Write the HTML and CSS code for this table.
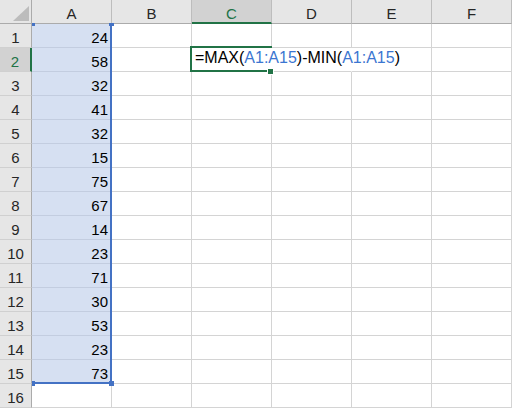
FILE: index.html
```html
<!DOCTYPE html>
<html>
<head>
<meta charset="utf-8">
<link rel="stylesheet" href="styles.css">
</head>
<body>
<div class="sheet">
  <div class="c corner"><svg width="31" height="23" viewBox="0 0 31 23"><polygon points="13,21 29,21 29,6" fill="#bcbcbc"/></svg></div>
  <div class="c h">A</div><div class="c h">B</div><div class="c h hsel">C</div><div class="c h">D</div><div class="c h">E</div><div class="c h">F</div>

  <div class="c rh">1</div><div class="c a">24</div><div class="c"></div><div class="c"></div><div class="c"></div><div class="c"></div><div class="c"></div>
  <div class="c rh rsel">2</div><div class="c a">58</div><div class="c"></div><div class="c f nr">=MAX(<span class="ref">A1:A15</span>)-MIN(<span class="ref">A1:A15</span>)</div><div class="c nr"></div><div class="c"></div><div class="c"></div>
  <div class="c rh">3</div><div class="c a">32</div><div class="c"></div><div class="c"></div><div class="c"></div><div class="c"></div><div class="c"></div>
  <div class="c rh">4</div><div class="c a">41</div><div class="c"></div><div class="c"></div><div class="c"></div><div class="c"></div><div class="c"></div>
  <div class="c rh">5</div><div class="c a">32</div><div class="c"></div><div class="c"></div><div class="c"></div><div class="c"></div><div class="c"></div>
  <div class="c rh">6</div><div class="c a">15</div><div class="c"></div><div class="c"></div><div class="c"></div><div class="c"></div><div class="c"></div>
  <div class="c rh">7</div><div class="c a">75</div><div class="c"></div><div class="c"></div><div class="c"></div><div class="c"></div><div class="c"></div>
  <div class="c rh">8</div><div class="c a">67</div><div class="c"></div><div class="c"></div><div class="c"></div><div class="c"></div><div class="c"></div>
  <div class="c rh">9</div><div class="c a">14</div><div class="c"></div><div class="c"></div><div class="c"></div><div class="c"></div><div class="c"></div>
  <div class="c rh">10</div><div class="c a">23</div><div class="c"></div><div class="c"></div><div class="c"></div><div class="c"></div><div class="c"></div>
  <div class="c rh">11</div><div class="c a">71</div><div class="c"></div><div class="c"></div><div class="c"></div><div class="c"></div><div class="c"></div>
  <div class="c rh">12</div><div class="c a">30</div><div class="c"></div><div class="c"></div><div class="c"></div><div class="c"></div><div class="c"></div>
  <div class="c rh">13</div><div class="c a">53</div><div class="c"></div><div class="c"></div><div class="c"></div><div class="c"></div><div class="c"></div>
  <div class="c rh">14</div><div class="c a">23</div><div class="c"></div><div class="c"></div><div class="c"></div><div class="c"></div><div class="c"></div>
  <div class="c rh">15</div><div class="c a">73</div><div class="c"></div><div class="c"></div><div class="c"></div><div class="c"></div><div class="c"></div>
  <div class="c rh">16</div><div class="c"></div><div class="c"></div><div class="c"></div><div class="c"></div><div class="c"></div><div class="c"></div>

  <div class="range"></div>
  <div class="hdl hdl-tl"></div>
  <div class="hdl hdl-tr"></div>
  <div class="hdl hdl-bl"></div>
  <div class="hdl hdl-br"></div>
  <div class="active"></div>
  <div class="fill-handle"></div>
</div>
</body>
</html>
```
FILE: styles.css
```css
html, body {
  margin: 0;
  padding: 0;
  background: #ffffff;
}

.sheet {
  position: relative;
  display: grid;
  grid-template-columns: 32px repeat(6, 80px);
  grid-auto-rows: 24px;
  width: 512px;
  height: 408px;
  overflow: hidden;
  font-family: "Liberation Sans", Arial, sans-serif;
}

.c {
  box-sizing: border-box;
  border-right: 1px solid #d4d4d4;
  border-bottom: 1px solid #d4d4d4;
  padding: 4px 3px 0;
  font-size: 15px;
  line-height: 19px;
  color: #000000;
  white-space: nowrap;
}

.corner {
  padding: 0;
  background: #e6e6e6;
  border-right-color: #ababab;
  border-bottom-color: #ababab;
}

.corner svg {
  display: block;
}

.h {
  background: #e6e6e6;
  border-right-color: #bdbdbd;
  border-bottom-color: #ababab;
  text-align: center;
  color: #262626;
  padding-left: 0;
  padding-right: 0;
}

.hsel {
  background: #d2d2d2;
  color: #217346;
  border-bottom: 2px solid #217346;
}

.rh {
  background: #e6e6e6;
  border-right-color: #ababab;
  border-bottom-color: #d0d0d0;
  text-align: center;
  color: #262626;
  padding-left: 0;
  padding-right: 0;
}

.rsel {
  background: #d2d2d2;
  color: #217346;
  border-right: 2px solid #217346;
}

.a {
  background: #d6e0f2;
  border-bottom-color: #c3cde0;
  text-align: right;
}

.nr {
  border-right-color: transparent;
}

.f {
  padding: 0 3px;
  font-size: 16px;
  line-height: 19px;
  overflow: visible;
}

.ref {
  color: #3b76d1;
}

.range {
  position: absolute;
  left: 32px;
  top: 24px;
  width: 80px;
  height: 360px;
  box-sizing: border-box;
  border-right: 2px solid #4472c4;
  border-bottom: 2px solid #4472c4;
}

.hdl {
  position: absolute;
  background: #4472c4;
}

.hdl-tl { left: 32px; top: 23px; width: 3px; height: 3px; }
.hdl-tr { left: 109px; top: 23px; width: 5px; height: 3px; }
.hdl-bl { left: 32px; top: 381px; width: 3px; height: 5px; }
.hdl-br { left: 109px; top: 381px; width: 5px; height: 5px; }

.active {
  position: absolute;
  left: 190px;
  top: 46px;
  width: 82px;
  height: 26px;
  box-sizing: border-box;
  border: 2px solid #217346;
  border-right: none;
}

.fill-handle {
  position: absolute;
  left: 267px;
  top: 68px;
  width: 7px;
  height: 7px;
  box-sizing: border-box;
  background: #217346;
  border: 1px solid #ffffff;
}
```
